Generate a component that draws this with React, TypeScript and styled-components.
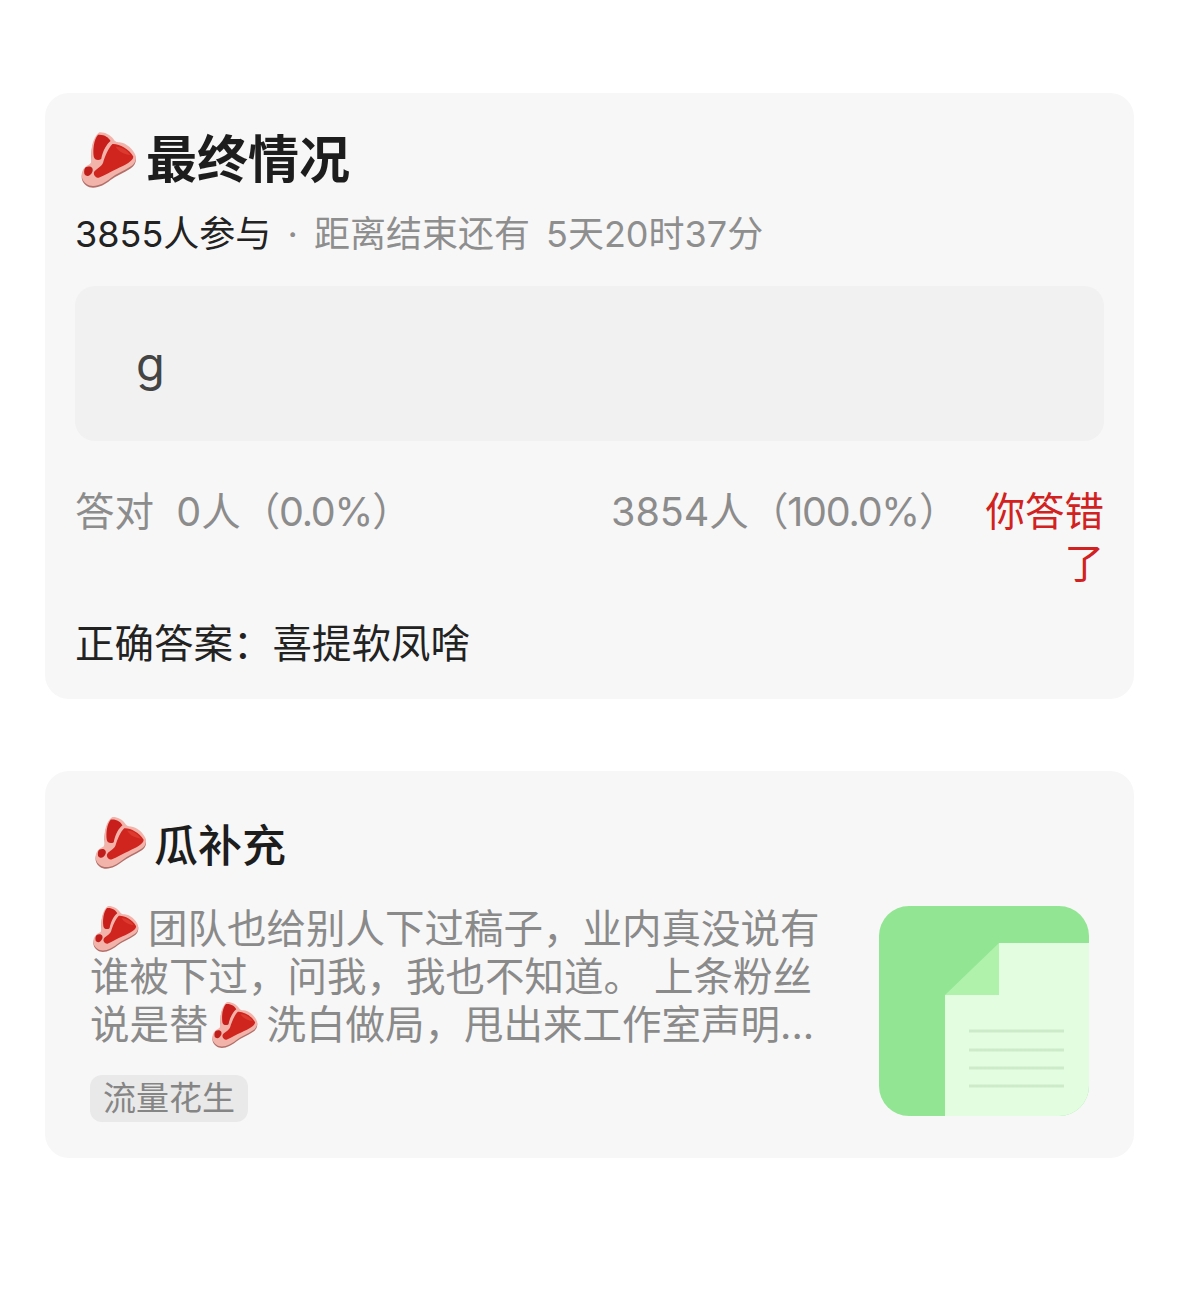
import { memo } from 'react';
import styled, { createGlobalStyle } from 'styled-components';

const GlobalStyle = createGlobalStyle`
  html, body {
    margin: 0;
    padding: 0;
    background: #fff;
  }
  body {
    font-family: "Inter", "Noto Sans CJK SC", "Noto Sans", sans-serif;
  }
`;

const steakOutline =
  'M70 14 C85 12 105 22 114 34 C120 44 125 46 135 46 C155 48 178 66 187 90 C189 105 182 117 170 124 C150 137 125 147 105 162 C90 174 70 186 50 186 C35 186 18 176 14 158 C11 140 20 126 36 118 C44 114 46 108 45 95 C42 70 48 30 70 14 Z';

// t-bone steak emoji
const Steak = ({ size, className }: { size: number; className?: string }) => (
  <SteakSvg className={className} width={size} height={size} viewBox="10 10 182 186">
    <path d={steakOutline} fill="#b3706a" transform="translate(0 6)" />
    <path d={steakOutline} fill="#f2b4aa" />
    <path
      d="M66 22 C85 20 100 30 106 42 C94 52 82 70 76 100 C68 106 54 104 52 92 C49 70 52 38 66 22 Z"
      fill="#c81f1c"
    />
    <path
      d="M112 52 C132 50 164 66 179 92 C180 106 152 120 127 131 C107 140 87 152 68 160 C60 162 48 150 54 140 C62 130 76 126 82 112 C88 92 98 66 112 52 Z"
      fill="#d0241e"
    />
    <path d="M122 60 C140 60 160 72 170 88 C150 85 132 78 122 60 Z" fill="#dc3a2e" />
    <path d="M26 126 C40 120 52 126 48 140 C42 156 28 158 22 148 C20 138 22 130 26 126 Z" fill="#bf1e1b" />
  </SteakSvg>
);

const DocThumb = () => (
  <ThumbSvg viewBox="0 0 210 210" width={210} height={210}>
    <rect width="210" height="210" fill="#92e592" />
    <path d="M120 37 H210 V210 H66 V89 H120 Z" fill="#e2fde0" />
    <path d="M120 37 V89 H66 Z" fill="#b0f2ab" />
    <g stroke="#cdebc8" strokeWidth="3">
      <line x1="90" x2="185" y1="125" y2="125" />
      <line x1="90" x2="185" y1="144" y2="144" />
      <line x1="90" x2="185" y1="162" y2="162" />
      <line x1="90" x2="185" y1="180" y2="180" />
    </g>
  </ThumbSvg>
);

export default memo(function App() {
  return (
    <Page>
      <GlobalStyle />
      <ResultCard>
        <ResultTitle>
          <Steak size={58} />
          最终情况
        </ResultTitle>
        <Meta>
          <strong>3855人参与</strong>
          <span> · 距离结束还有 5天20时37分</span>
        </Meta>
        <OptionBox>g</OptionBox>
        <StatsRow>
          <Stat>
            答对&nbsp; 0人<Ratio>（0.0%）</Ratio>
          </Stat>
          <Stat>
            3854人<Ratio>（100.0%）</Ratio>
          </Stat>
          <Verdict>你答错了</Verdict>
        </StatsRow>
        <Answer>正确答案：喜提软凤啥</Answer>
      </ResultCard>

      <ArticleCard>
        <ArticleTitle>
          <Steak size={54} />
          瓜补充
        </ArticleTitle>
        <ArticleBody>
          <div>
            <Summary>
              <InlineSteak size={48} />
              团队也给别人下过稿子，业内真没说有谁被下过，问我，我也不知道。 上条粉丝说是替
              <InlineSteak size={48} />
              洗白做局，甩出来工作室声明...
            </Summary>
            <Tag>流量花生</Tag>
          </div>
          <DocThumb />
        </ArticleBody>
      </ArticleCard>
    </Page>
  );
});

const Page = styled.div`
  width: 1179px;
  height: 1295px;
  box-sizing: border-box;
  padding: 93px 45px 0;
  overflow: hidden;
  background: #fff;
`;

const Card = styled.div`
  background: #f7f7f7;
  border-radius: 24px;
  box-sizing: border-box;
`;

const ResultCard = styled(Card)`
  height: 606px;
  padding: 37px 30px 0;
`;

const ArticleCard = styled(Card)`
  height: 387px;
  margin-top: 72px;
  padding: 45px 45px 0;
`;

const SteakSvg = styled.svg`
  flex: none;
`;

const InlineSteak = styled(Steak)`
  vertical-align: 1px;
  margin: -11px 8px -11px 2px;
`;

const ThumbSvg = styled.svg`
  flex: none;
  border-radius: 30px;
  margin-top: 1px;
`;

const ResultTitle = styled.div`
  display: flex;
  align-items: center;
  gap: 8px;
  height: 60px;
  padding-left: 5px;
  font-size: 51px;
  font-weight: 700;
  line-height: 60px;
  color: #1d1d1d;
`;

const Meta = styled.div`
  margin-top: 19px;
  font-size: 36px;
  line-height: 50px;
  color: #8e8e8e;
  white-space: nowrap;
  strong {
    font-weight: 400;
    color: #222;
  }
  span {
    word-spacing: 6px;
  }
`;

const OptionBox = styled.div`
  height: 155px;
  margin-top: 27px;
  padding-left: 61px;
  background: #f1f1f1;
  border-radius: 20px;
  font-size: 47px;
  line-height: 155px;
  color: #444;
`;

const StatsRow = styled.div`
  display: grid;
  grid-template-columns: 536px 1fr 120px;
  margin-top: 45px;
  font-size: 39.5px;
  line-height: 52px;
  color: #8c8c8c;
`;

const Stat = styled.div`
  white-space: nowrap;
`;

const Ratio = styled.span`
  letter-spacing: -1.2px;
`;

const Verdict = styled.div`
  color: #d22121;
  text-align: right;
`;

const Answer = styled.div`
  margin-top: 29px;
  font-size: 39.5px;
  line-height: 50px;
  color: #222;
  white-space: nowrap;
`;

const ArticleTitle = styled.div`
  display: flex;
  align-items: center;
  gap: 6px;
  height: 54px;
  padding-left: 4px;
  font-size: 44px;
  font-weight: 500;
  color: #1d1d1d;
`;

const ArticleBody = styled.div`
  display: flex;
  justify-content: space-between;
  margin-top: 35px;
`;

const Summary = styled.div`
  width: 735px;
  font-size: 39.5px;
  line-height: 48px;
  color: #8a8a8a;
`;

const Tag = styled.div`
  display: inline-block;
  margin-top: 26px;
  padding: 0 13px;
  background: #e9e9e9;
  border-radius: 12px;
  font-size: 33px;
  line-height: 47px;
  color: #858585;
`;
